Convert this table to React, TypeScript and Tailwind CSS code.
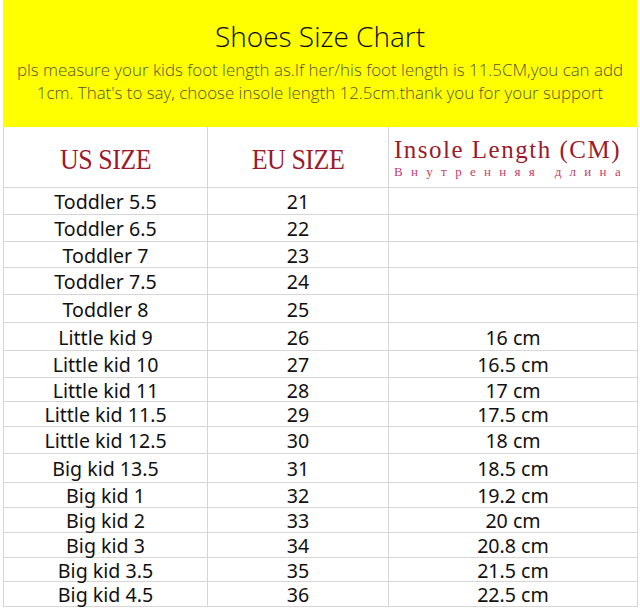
const rows = [
  { us: 'Toddler 5.5', eu: '21', cm: '', h: 'h-[27px]' },
  { us: 'Toddler 6.5', eu: '22', cm: '', h: 'h-[27px]' },
  { us: 'Toddler 7', eu: '23', cm: '', h: 'h-[26px]' },
  { us: 'Toddler 7.5', eu: '24', cm: '', h: 'h-[27px]' },
  { us: 'Toddler 8', eu: '25', cm: '', h: 'h-[28px]' },
  { us: 'Little kid 9', eu: '26', cm: '16 cm', h: 'h-[28px]' },
  { us: 'Little kid 10', eu: '27', cm: '16.5 cm', h: 'h-[27px]' },
  { us: 'Little kid 11', eu: '28', cm: '17 cm', h: 'h-[24px]' },
  { us: 'Little kid 11.5', eu: '29', cm: '17.5 cm', h: 'h-[25px]' },
  { us: 'Little kid 12.5', eu: '30', cm: '18 cm', h: 'h-[27px]' },
  { us: 'Big kid 13.5', eu: '31', cm: '18.5 cm', h: 'h-[29px]' },
  { us: 'Big kid 1', eu: '32', cm: '19.2 cm', h: 'h-[25px]' },
  { us: 'Big kid 2', eu: '33', cm: '20 cm', h: 'h-[25px]' },
  { us: 'Big kid 3', eu: '34', cm: '20.8 cm', h: 'h-[25px]' },
  { us: 'Big kid 3.5', eu: '35', cm: '21.5 cm', h: 'h-[24px]' },
  { us: 'Big kid 4.5', eu: '36', cm: '22.5 cm', h: 'h-[25px]' },
];

const cell = 'flex items-center justify-center border-r border-b border-[#d6d6d6]';

export default function App() {
  return (
    <div className="w-[640px] h-[610px] overflow-hidden bg-white px-[3px]">
      {/* Yellow banner */}
      <div className="h-[127px] bg-[#ffff00] flex flex-col items-center pt-[17px] font-['Open_Sans',sans-serif]">
        <h1 className="text-[28px] leading-[38px] font-light text-[#0a0a0a]">Shoes Size Chart</h1>
        <p className="mt-[3px] text-[16.9px] leading-[23px] font-light text-[#55553a] text-center whitespace-nowrap">
          pls measure your kids foot length as.If her/his foot length is 11.5CM,you can add
          <br />
          1cm. That's to say, choose insole length 12.5cm.thank you for your support
        </p>
      </div>

      {/* Table */}
      <div className="grid grid-cols-[204px_181px_249px] border-l border-[#d6d6d6]">
        <div className={`${cell} h-[61px] pt-[5px]`}>
          <span className="font-['Liberation_Serif',serif] text-[26px] text-[#9b1b2c] tracking-[-0.5px] scale-y-110">US SIZE</span>
        </div>
        <div className={`${cell} h-[61px] pt-[5px]`}>
          <span className="font-['Liberation_Serif',serif] text-[26px] text-[#9b1b2c] tracking-[-0.5px] scale-y-110">EU SIZE</span>
        </div>
        <div className="h-[61px] border-r border-b border-[#d6d6d6] flex flex-col pl-[5px] pt-[8px] font-['Liberation_Serif',serif]">
          <span className="text-[25px] leading-[30px] text-[#9b1b2c] tracking-[1.5px]">Insole Length (CM)</span>
          <span className="text-[13px] leading-[16px] text-[#c2406a] tracking-[8.3px] mt-[-1px] whitespace-nowrap">Внутренняя длина</span>
        </div>

        {rows.map((r) => (
          <div key={r.us} className="contents font-['Noto_Sans',sans-serif] text-[19.6px] text-[#111]">
            <div className={`${cell} ${r.h} pt-[2px]`}>{r.us}</div>
            <div className={`${cell} ${r.h} pt-[2px]`}>{r.eu}</div>
            <div className={`${cell} ${r.h} pt-[2px]`}>{r.cm}</div>
          </div>
        ))}
      </div>
    </div>
  );
}
